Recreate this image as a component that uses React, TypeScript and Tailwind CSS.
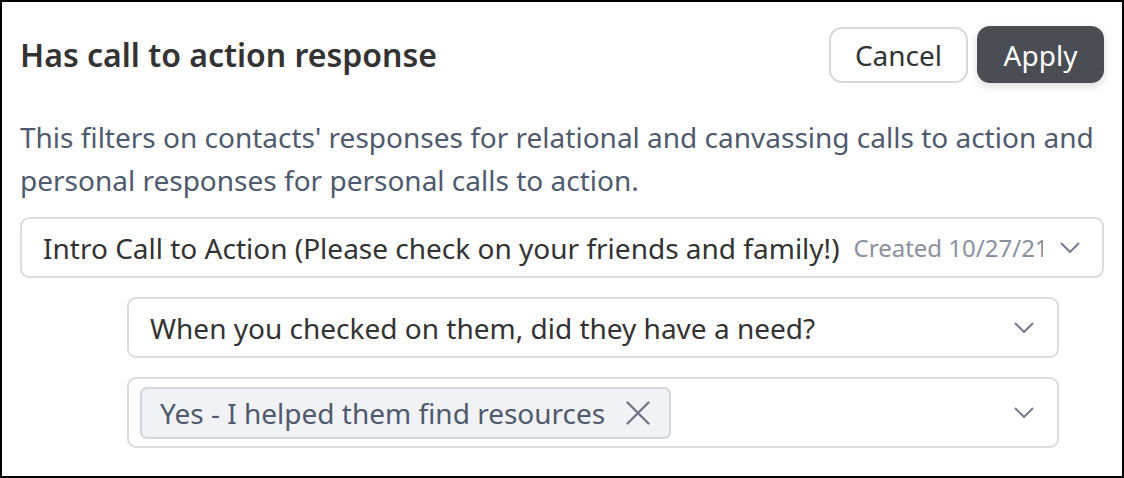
function Chevron() {
  return (
    <svg width="20" height="12" viewBox="0 0 20 12" fill="none" className="shrink-0 text-[#70768a]">
      <path d="M1.5 1.5 10 10 18.5 1.5" stroke="currentColor" strokeWidth="1.8" strokeLinecap="round" strokeLinejoin="round" />
    </svg>
  );
}

function Cross() {
  return (
    <svg width="24" height="24" viewBox="0 0 24 24" fill="none" className="shrink-0 text-[#70768a]">
      <path d="M1.5 1.5 22.5 22.5 M22.5 1.5 1.5 22.5" stroke="currentColor" strokeWidth="2.4" strokeLinecap="round" />
    </svg>
  );
}

export default function App() {
  return (
    <div
      className="w-[1124px] h-[478px] border-2 border-black bg-white px-[18px] pt-[24px] overflow-hidden"
      style={{ fontFamily: '"Noto Sans", "Open Sans", sans-serif' }}
    >
      {/* Header */}
      <div className="flex items-center justify-between h-[57px]">
        <h1 className="text-[32px] font-semibold text-[#333333] leading-none">
          Has call to action response
        </h1>
        <div className="flex items-center gap-[9px]">
          <button className="h-[56px] w-[139px] rounded-[13px] border-2 border-[#d6d8dc] bg-white text-[28px] text-[#333333]">
            Cancel
          </button>
          <button className="h-[57px] w-[127px] rounded-[13px] bg-[#4a4d53] text-[28px] text-white shadow-[0_3px_8px_rgba(0,0,0,0.15)]">
            Apply
          </button>
        </div>
      </div>

      {/* Description */}
      <p className="mt-[33px] text-[28px] leading-[43px] text-[#4f5a6e]">
        This filters on contacts' responses for relational and canvassing calls to action and
        personal responses for personal calls to action.
      </p>

      {/* Call to action select */}
      <div className="mt-[15px] h-[61px] rounded-[9px] border-2 border-[#dcdcdc] flex items-center pl-[21px] pr-[22px]">
        <span className="text-[28px] text-[#333333] whitespace-nowrap">
          Intro Call to Action (Please check on your friends and family!)
        </span>
        <span className="ml-[14px] mr-[17px] flex-1 min-w-0 overflow-hidden whitespace-nowrap text-[24px] text-[#8b90a0]">
          Created 10/27/21
        </span>
        <Chevron />
      </div>

      {/* Question select */}
      <div className="ml-[107px] mr-[45px] mt-[19px] h-[61px] rounded-[9px] border-2 border-[#dcdcdc] flex items-center justify-between pl-[21px] pr-[23px]">
        <span className="text-[28px] text-[#333333]">
          When you checked on them, did they have a need?
        </span>
        <Chevron />
      </div>

      {/* Response multi-select */}
      <div className="ml-[107px] mr-[45px] mt-[19px] h-[71px] rounded-[9px] border-2 border-[#dcdcdc] flex items-center justify-between pl-[11px] pr-[23px]">
        <div className="h-[52px] flex items-center gap-[21px] rounded-[7px] border-2 border-[#d3d6dd] bg-[#f1f2f6] pl-[18px] pr-[19px]">
          <span className="text-[28px] text-[#4f5a6e]">Yes - I helped them find resources</span>
          <Cross />
        </div>
        <Chevron />
      </div>
    </div>
  );
}
